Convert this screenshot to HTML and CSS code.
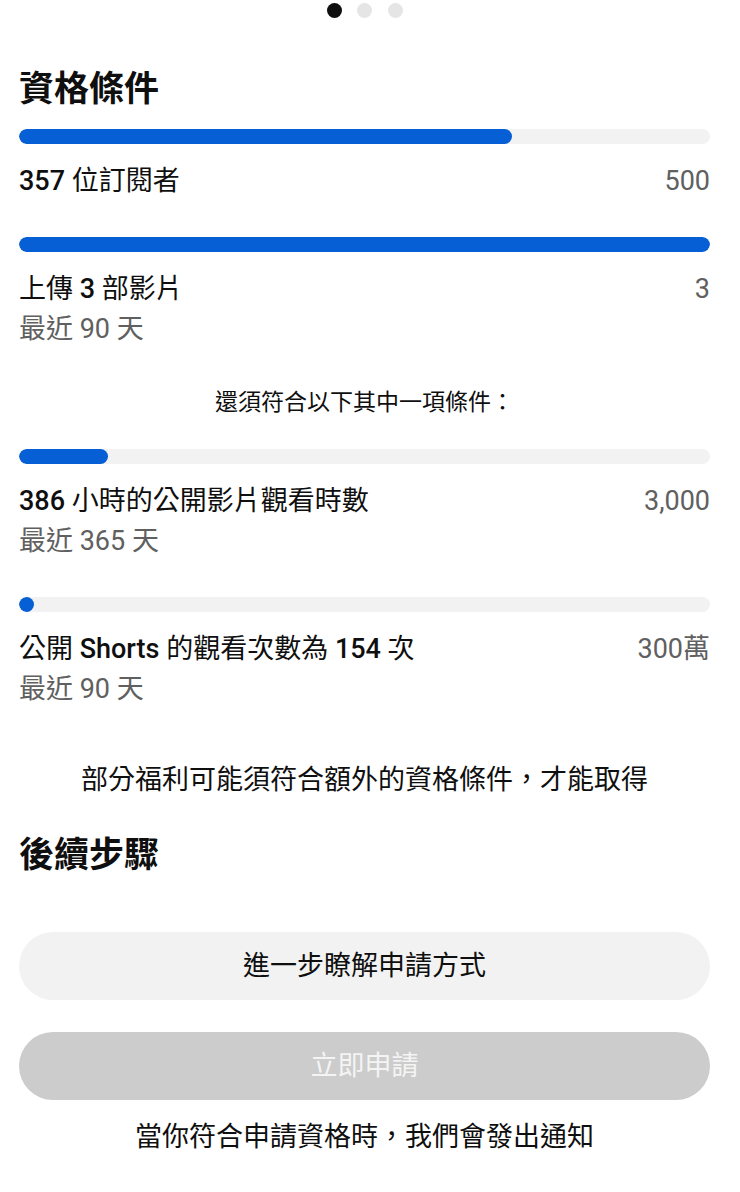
FILE: index.html
```html
<!DOCTYPE html>
<html lang="zh-Hant">
<head>
<meta charset="utf-8">
<link rel="stylesheet" href="styles.css">
</head>
<body>
<div class="page">
  <div class="dots">
    <span class="dot dot-on"></span>
    <span class="dot"></span>
    <span class="dot"></span>
  </div>

  <h1 class="heading heading-first">資格條件</h1>

  <div class="req req-first">
    <div class="bar"><div class="fill" style="width:71.4%"></div></div>
    <div class="row">
      <div class="label"><span class="latin">357</span> 位訂閱者</div>
      <div class="goal">500</div>
    </div>
  </div>

  <div class="req">
    <div class="bar"><div class="fill" style="width:100%"></div></div>
    <div class="row">
      <div class="label">上傳 <span class="latin">3</span> 部影片</div>
      <div class="goal">3</div>
    </div>
    <div class="sub">最近 90 天</div>
  </div>

  <p class="note">還須符合以下其中一項條件：</p>

  <div class="req req-after-note">
    <div class="bar"><div class="fill" style="width:12.9%"></div></div>
    <div class="row">
      <div class="label"><span class="latin">386</span> 小時的公開影片觀看時數</div>
      <div class="goal">3,000</div>
    </div>
    <div class="sub">最近 365 天</div>
  </div>

  <div class="req">
    <div class="bar"><div class="fill" style="width:0.005%"></div></div>
    <div class="row">
      <div class="label">公開 <span class="latin">Shorts</span> 的觀看次數為 <span class="latin">154</span> 次</div>
      <div class="goal">300萬</div>
    </div>
    <div class="sub">最近 90 天</div>
  </div>

  <p class="info">部分福利可能須符合額外的資格條件，才能取得</p>

  <h2 class="heading heading-second">後續步驟</h2>

  <div class="actions">
    <button class="btn btn-light">進一步瞭解申請方式</button>
    <button class="btn btn-disabled">立即申請</button>
  </div>

  <p class="footer">當你符合申請資格時，我們會發出通知</p>
</div>
</body>
</html>
```

FILE: styles.css
```css
* { box-sizing: border-box; }
html, body { margin: 0; padding: 0; background: #fff; }
body {
  font-family: Roboto, "Noto Sans CJK TC", "Noto Sans", sans-serif;
  color: #0f0f0f;
}
.page {
  width: 740px;
  padding: 3px 30px 0 19px;
}
.dots {
  display: flex;
  justify-content: center;
  gap: 15.5px;
  margin-right: -30px;
  padding-right: 30px;
}
.dot {
  width: 15px;
  height: 15px;
  border-radius: 50%;
  background: #e5e5e5;
}
.dot-on { background: #0f0f0f; }

.heading {
  margin: 0;
  font-size: 35px;
  line-height: 44px;
  font-weight: 700;
}
.heading-first { margin-top: 50px; }
.heading-second { margin-top: 34px; }

.req { margin-top: 36px; }
.req-first { margin-top: 17px; }
.req-after-note { margin-top: 31px; }

.bar {
  height: 15px;
  border-radius: 8px;
  background: #f2f2f2;
  overflow: hidden;
}
.fill {
  height: 100%;
  min-width: 15px;
  border-radius: 8px;
  background: #065fd4;
}
.row {
  display: flex;
  justify-content: space-between;
  align-items: center;
  margin-top: 17px;
  font-size: 27px;
  line-height: 40px;
}
.label { font-weight: 400; }
.latin { font-weight: 500; }
.goal { color: #606060; font-weight: 400; }
.sub {
  color: #606060;
  font-size: 27px;
  line-height: 40px;
}

.note {
  margin: 39px 0 0;
  text-align: center;
  font-size: 23px;
  line-height: 30px;
}
.info {
  margin: 51px 0 0;
  text-align: center;
  font-size: 27px;
  line-height: 40px;
}
.actions {
  display: flex;
  flex-direction: column;
  gap: 32px;
  margin-top: 54px;
}
.btn {
  display: block;
  width: 100%;
  height: 68px;
  border: 0;
  border-radius: 34px;
  font-family: inherit;
  font-size: 27px;
  font-weight: 400;
  padding: 0 0 5px;
}
.btn-light { background: #f2f2f2; color: #0f0f0f; }
.btn-disabled { background: #cccccc; color: #f4f4f4; }
.footer {
  margin: 17px 0 0;
  text-align: center;
  font-size: 27px;
  line-height: 40px;
}
```
